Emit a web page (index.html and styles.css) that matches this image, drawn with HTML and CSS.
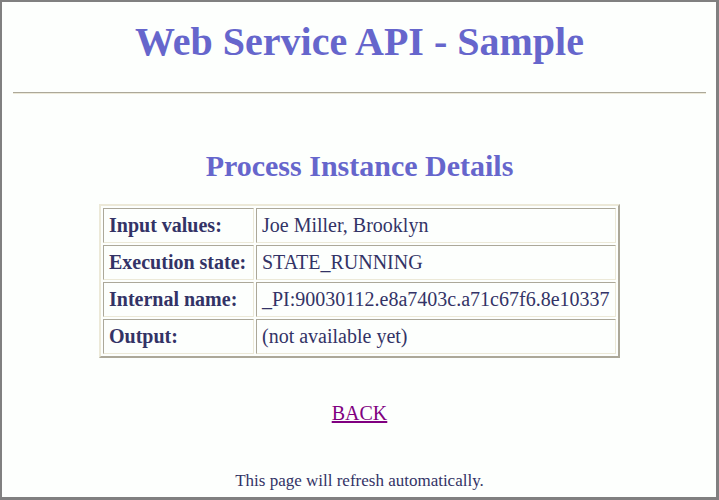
FILE: index.html
```html
<!DOCTYPE html>
<html lang="en">
<head>
    <meta charset="UTF-8">
    <title>Web Service API - Sample</title>
    <link rel="stylesheet" href="styles.css">
</head>
<body>
    <h1 class="title">Web Service API - Sample</h1>
    <hr class="rule">

    <h2 class="subtitle">Process Instance Details</h2>

    <table class="details">
        <tr>
            <th>Input values:</th>
            <td>Joe Miller, Brooklyn</td>
        </tr>
        <tr>
            <th>Execution state:</th>
            <td>STATE_RUNNING</td>
        </tr>
        <tr>
            <th>Internal name:</th>
            <td>_PI:90030112.e8a7403c.a71c67f6.8e10337</td>
        </tr>
        <tr>
            <th>Output:</th>
            <td>(not available yet)</td>
        </tr>
    </table>

    <p class="back"><a href="#">BACK</a></p>

    <p class="note">This page will refresh automatically.</p>
</body>
</html>
```

FILE: styles.css
```css
html{
    height: 500px;
    box-sizing: border-box;
    border-style: solid;
    border-color: #808080;
    border-width: 2px 3px 3px 2px;
    background: #fdfffd;
    overflow: hidden;
}

body{
    margin: 0;
    padding: 0 10px 0 11px;
    font-family: "Liberation Serif", "Times New Roman", serif;
    color: #333366;
}

.title{
    margin: 0;
    padding-top: 16px;
    font-size: 40px;
    line-height: 48px;
    font-weight: bold;
    text-align: center;
    color: #6666cc;
}

.rule{
    margin: 26px 0 0 0;
    height: 0;
    border: none;
    border-top: 1px solid #aca899;
    border-bottom: 1px solid #ece9d8;
}

.subtitle{
    margin: 55px 0 0 0;
    font-size: 30px;
    line-height: 34px;
    font-weight: bold;
    text-align: center;
    color: #6666cc;
}

.details{
    margin: 21px auto 0 auto;
    width: 521px;
    border-style: solid;
    border-width: 2px;
    border-color: #ece9d8 #aca899 #aca899 #ece9d8;
    border-spacing: 2px;
}

.details th,
.details td{
    height: 33px;
    padding: 0 5px;
    border-style: solid;
    border-width: 1px;
    border-color: #aca899 #ece9d8 #ece9d8 #aca899;
    font-size: 20px;
    text-align: left;
    white-space: nowrap;
}

.details th{
    width: 139px;
}

.back{
    margin: 44px 0 0 0;
    font-size: 20px;
    text-align: center;
}

.back a{
    color: #800080;
}

.note{
    margin: 46px 0 0 0;
    font-size: 17px;
    text-align: center;
}
```
